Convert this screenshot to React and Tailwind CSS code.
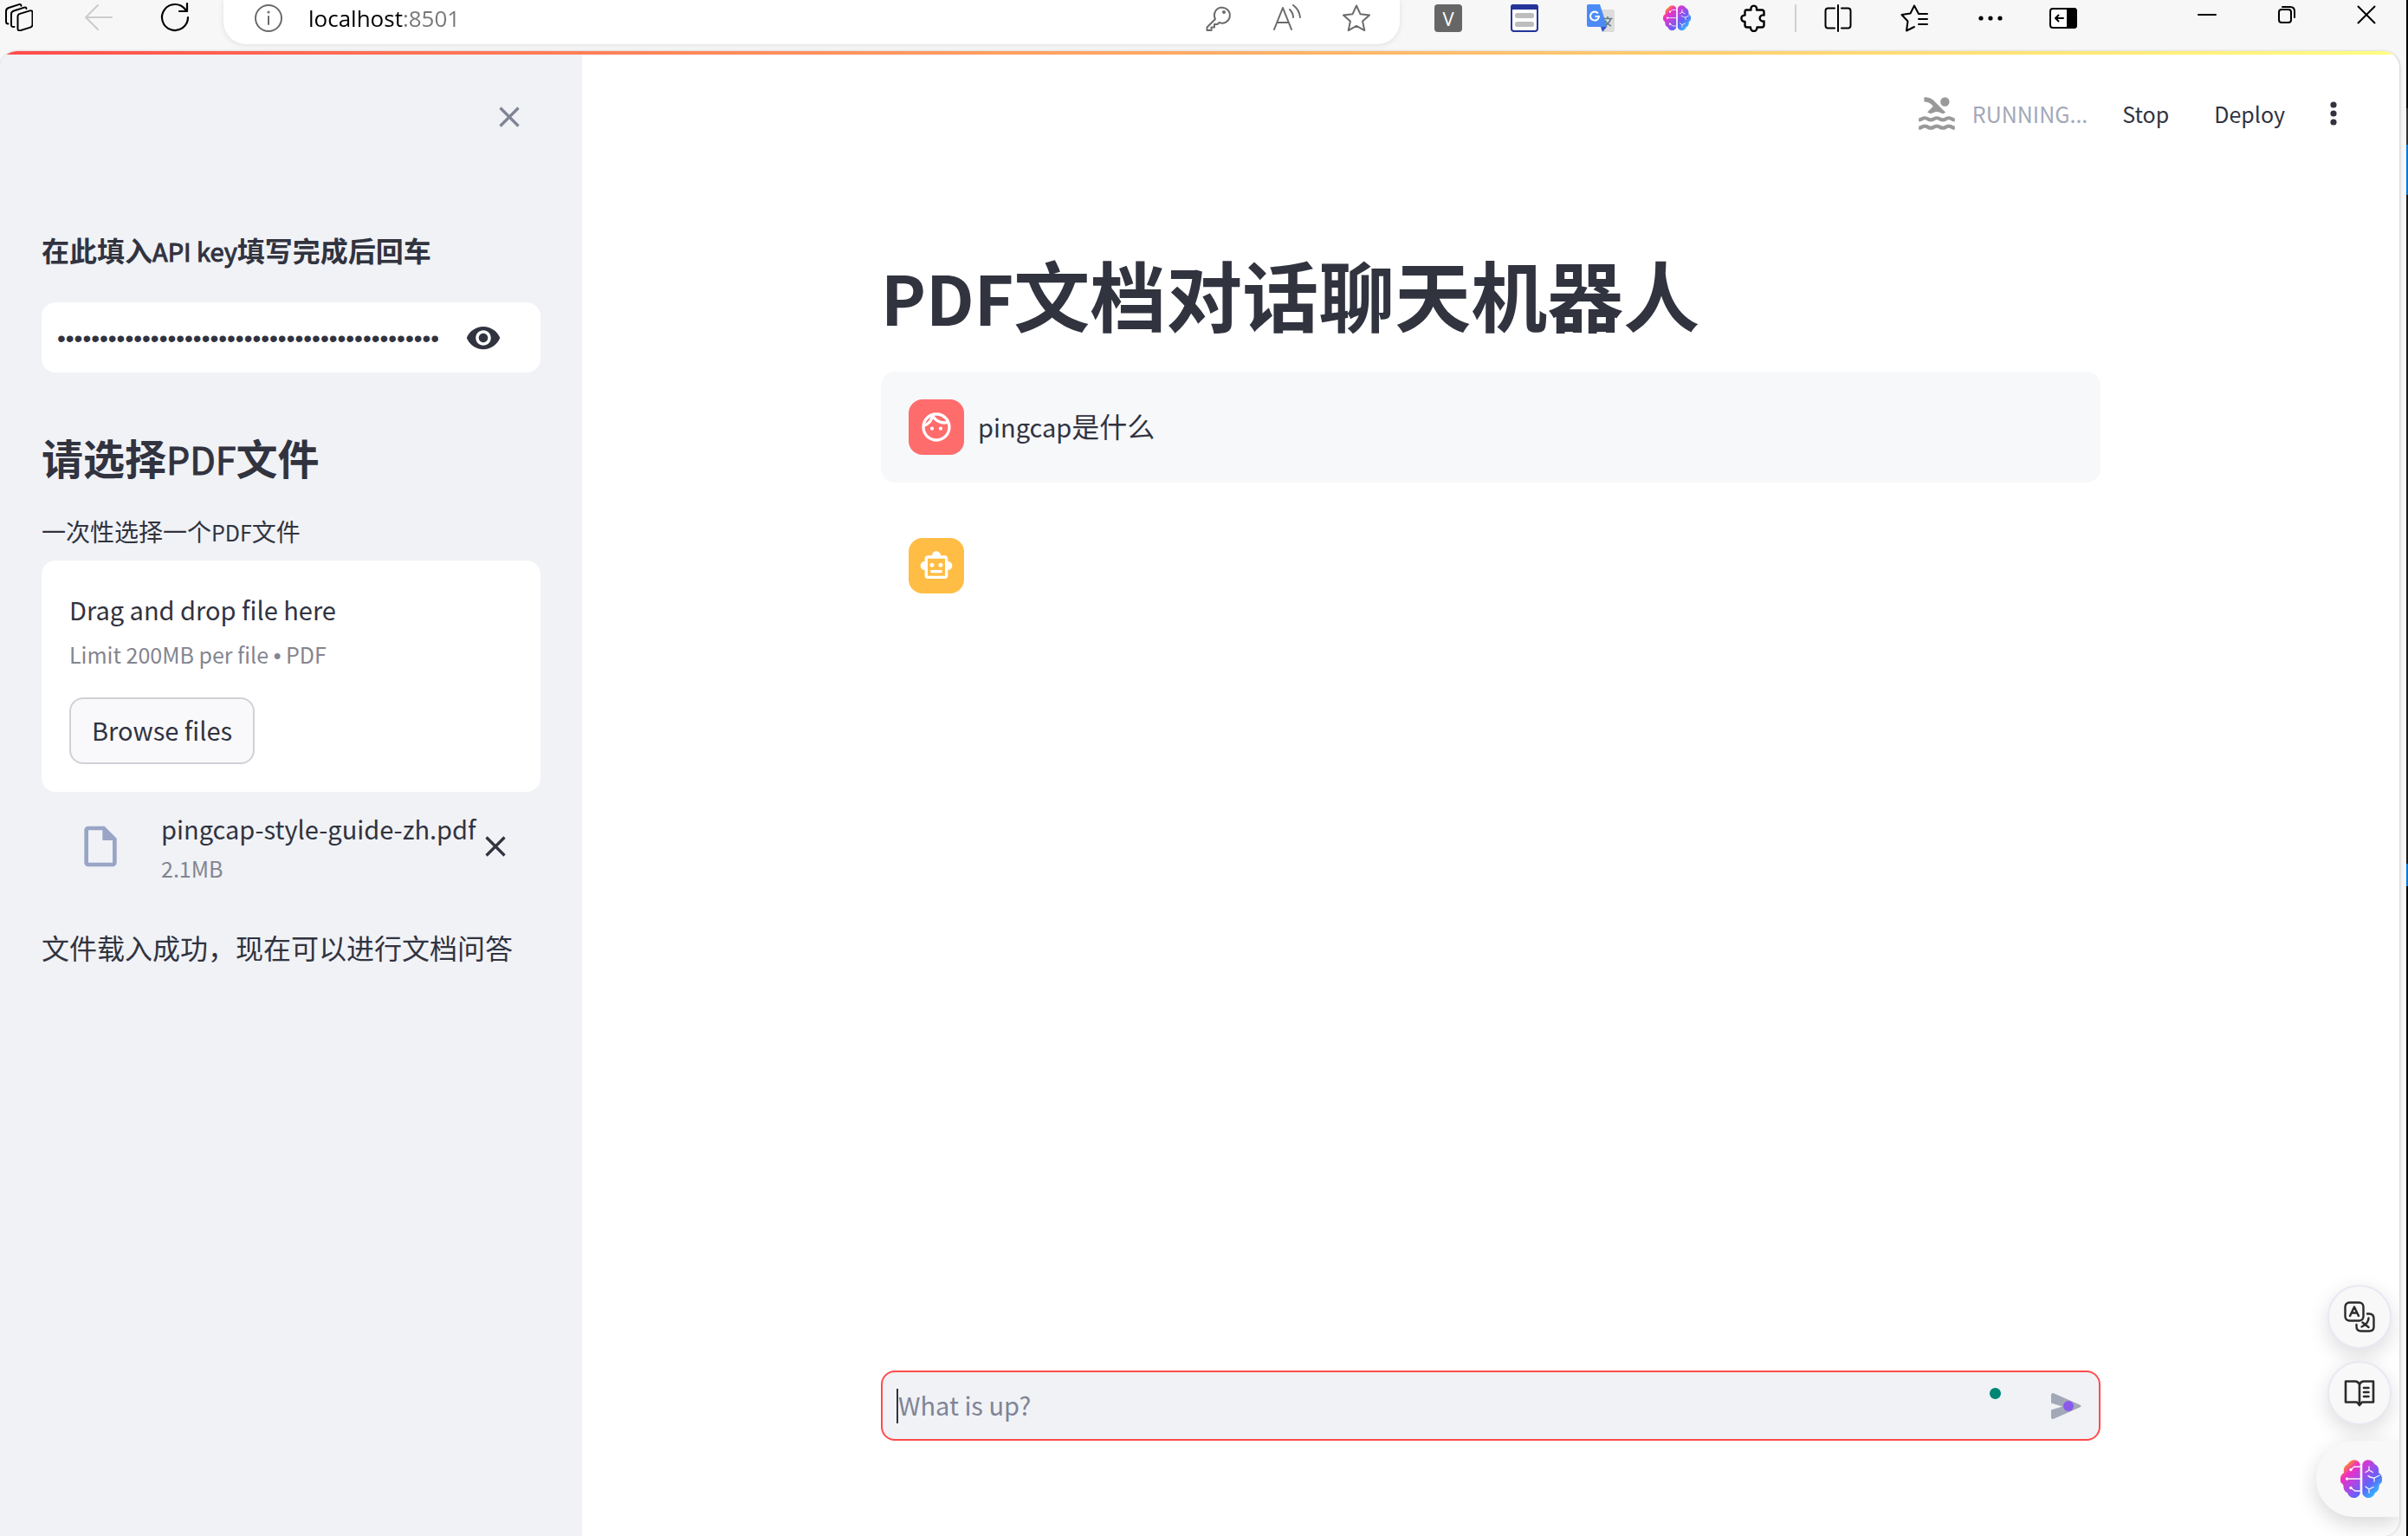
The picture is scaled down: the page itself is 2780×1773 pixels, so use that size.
import { MdOutlineFace, MdOutlineSmartToy, MdPool, MdVisibility, MdOutlineInsertDriveFile } from "react-icons/md";

function Icon({ size = "size-8", className = "", children, view = "0 0 32 32", sw = 2 }) {
  return (
    <svg viewBox={view} className={`${size} shrink-0 ${className}`} fill="none" stroke="currentColor" strokeWidth={sw} strokeLinecap="round" strokeLinejoin="round" aria-hidden="true">
      {children}
    </svg>
  );
}

function Brain({ className, id }) {
  return (
    <svg viewBox="0 0 48 44" className={`shrink-0 ${className}`} aria-hidden="true">
      <defs>
        <linearGradient id={id} x1="5" y1="3" x2="42" y2="40" gradientUnits="userSpaceOnUse">
          <stop offset="0" stopColor="#ffa800" />
          <stop offset="0.22" stopColor="#f02fc2" />
          <stop offset="0.5" stopColor="#a34be8" />
          <stop offset="0.72" stopColor="#5f63fa" />
          <stop offset="1" stopColor="#2fc0ff" />
        </linearGradient>
      </defs>
      <g fill={`url(#${id})`}>
        <path d="M22.700 6C22 -1 12 -2 8.500 5C5 6.500 3 10 4 15C0 17 -1.500 23 1 27C3 28 3.500 29 3.500 31C3.500 34 5 37 8 38C10 44 16 45.500 20 42.500C22 41 22.700 39.500 22.700 38Z" />
        <path d="M25.300 6C26 -1 36 -2 39.500 5C43 6.500 45 10 44 15C48 17 49.500 23 47 27C45 28 44.500 29 44.500 31C44.500 34 43 37 40 38C38 44 32 45.500 28 42.500C26 41 25.300 39.500 25.300 38Z" />
      </g>
      <g fill="none" stroke="#f7f7f7" strokeWidth="1.300" strokeLinecap="round">
        <path d="M23 8H16L12 11.500M23 22H8M23 36H17L12 32.500M33 8v4l-4 2.500M33 12l4.500 2.500M32 18.500c2 2.500 5 2 7 2.500l6-3M39 21v4M29 31l4 3l5-2.500M33 34v4" />
      </g>
      <g fill="#f7f7f7">
        <circle cx="12" cy="11.500" r="1.700" />
        <circle cx="7.500" cy="22" r="1.700" />
        <circle cx="12" cy="32.500" r="1.700" />
      </g>
    </svg>
  );
}

function BarButton({ label, children, className = "" }) {
  return (
    <button type="button" aria-label={label} className={`flex size-8 shrink-0 items-center justify-center ${className}`}>
      {children}
    </button>
  );
}

function TranslateLogo() {
  return (
    <svg viewBox="0 0 32 32" className="size-8" aria-hidden="true">
      <path d="M11 6h19q2 0 2 2v22q0 2-2 2H19z" fill="#dcdcdc" />
      <path d="M16 26h7l-5 6z" fill="#3a53c5" />
      <path d="M2 0h13l8.500 26H2q-2 0-2-2V2q0-2 2-2z" fill="#4c8bf5" />
      <path d="M13 10.500A5 5 0 1 0 14 14H9.500" fill="none" stroke="#fff" strokeWidth="2" />
      <path d="M19 16.500h10.500M24 14v2.500M27.500 16.500q-1 4.500-6 8M21 18.500q2 4 7 6.500" fill="none" stroke="#607d8b" strokeWidth="1.600" />
    </svg>
  );
}

function BrowserBar() {
  return (
    <header className="flex h-[59px] shrink-0 items-start justify-between pl-[6px] pr-[30px] text-black">
      <div className="flex items-start">
        <BarButton label="Workspaces" className="mt-1">
          <Icon>
            <path d="M14.500 15Q14.500 12.600 17 11.900L28.500 8.400Q31.500 7.600 31.500 10.500V24.500Q31.500 26.800 29 27.600L17.500 31.200Q14.500 32 14.500 29Z" />
            <path d="M24.500 6Q24.200 3.900 22 4.600L10 8.500Q7 9.500 7 12V25Q7 27.500 10.500 27M18.500 2.700Q18 0.500 16 1.100L4 5Q1 6 1 9V21Q1 23.500 3.500 23.500" />
          </Icon>
        </BarButton>
        <BarButton label="Back" className="ml-[60px] mt-1 text-[#cccccc]">
          <Icon><path d="M31 16H1M15 2L1 16l14 14" /></Icon>
        </BarButton>
        <BarButton label="Refresh" className="ml-14 mt-1">
          <Icon size="size-9" view="0 0 36 36" sw="2.200"><path d="M33 18A15 15 0 1 1 30 9M32 2v9h-9" /></Icon>
        </BarButton>
        <div className="ml-10 flex h-[51px] w-[1358px] items-start rounded-b-[26px] bg-white pl-9 pr-[34px] pt-[5px] text-[#6b6b6b] shadow-[0_1px_6px_rgba(0,0,0,0.1)]">
          <Icon>
            <circle cx="16" cy="16" r="15" />
            <path d="M16 14v9" /><circle cx="16" cy="9" r="0.600" />
          </Icon>
          <input
            aria-label="Address"
            defaultValue="localhost:8501"
            className="ml-[30px] h-8 min-w-0 flex-1 bg-linear-to-r from-black from-[111px] to-[#777777] to-[111px] bg-clip-text font-['Open_Sans','Noto_Sans',sans-serif] text-[26px] leading-8 text-transparent outline-none"
          />
          <div className="flex gap-12">
            <Icon>
              <path d="M13 17L3.500 26.500V30h5v-3.500h3.500V23h3.500l2-2A9 9 0 1 0 13 17z" /><circle cx="23" cy="9" r="1" />
            </Icon>
            <Icon><path d="M1 29L11 4l10 25M4.500 21h13M19 6q4 4 4 9M23 1q7 5 8 14" /></Icon>
            <Icon><path d="M16 1.500l4.400 9.700 10.600 1.200-7.900 7.200 2.200 10.500L16 24.900 6.700 30.100l2.200-10.500L1 12.400l10.600-1.200z" /></Icon>
          </div>
        </div>
        <div className="ml-10 mt-[5px] flex items-start gap-14">
          <BarButton label="V extension" className="rounded bg-[#666666] font-['Open_Sans',sans-serif] text-[22px] leading-8 text-white">V</BarButton>
          <BarButton label="Window extension">
            <svg viewBox="0 0 32 32" className="size-8" aria-hidden="true">
              <rect x="1" y="1" width="30" height="30" rx="3" fill="#fff" stroke="#24349a" strokeWidth="2" />
              <path d="M0 6V3q0-3 3-3h26q3 0 3 3v3z" fill="#24349a" />
              <rect x="5" y="10" width="22" height="6" rx="2.500" fill="#bdbdbd" />
              <rect x="5" y="20" width="22" height="6" rx="2.500" fill="#bdbdbd" />
            </svg>
          </BarButton>
          <BarButton label="Translate extension"><TranslateLogo /></BarButton>
          <BarButton label="Assistant extension"><Brain id="brain-small" className="w-8" /></BarButton>
          <BarButton label="Extensions">
            <Icon sw="2.400">
              <path d="M8 6.500H13.500C12.500 0 21 0 20 6.500H26Q28.500 6.500 28.500 9V12.500C22 11.500 22 20.500 28.500 19.500V24Q28.500 26.500 26 26.500H20.500C20.500 32.500 13 32.500 13 26.500H9Q6.500 26.500 6.500 24V20C1 20 1 12.500 6.500 12.500V9Q6.500 6.500 8 6.500" />
            </Icon>
          </BarButton>
        </div>
        <div className="ml-8 mt-[5px] h-8 w-0.5 bg-[#d0d0d0]" />
        <div className="ml-8 mt-[5px] flex items-start gap-14">
          <BarButton label="Split screen"><Icon><path d="M12 4.500H4.500Q1.500 4.500 1.500 7.500V24.500Q1.500 27.500 4.500 27.500H12M20 4.500H27.500Q30.500 4.500 30.500 7.500V24.500Q30.500 27.500 27.500 27.500H20M16 1V31" /></Icon></BarButton>
          <BarButton label="Favorites"><Icon><path d="M21 11L16 1.500L11.500 10.500L1.500 12L8.500 19.500L7 30.500L16 26M21 11H31M21 17H31M21 23H31" /></Icon></BarButton>
          <BarButton label="More">
            <svg viewBox="0 0 32 32" className="size-8" fill="currentColor" aria-hidden="true"><circle cx="5" cy="16" r="2.600" /><circle cx="16" cy="16" r="2.600" /><circle cx="27" cy="16" r="2.600" /></svg>
          </BarButton>
          <BarButton label="Side panel" className="-ml-1">
            <Icon><rect x="1" y="5" width="30" height="22" rx="3" fill="#fff" /><path d="M21 5h7q3 0 3 3v16q0 3-3 3h-7z" fill="currentColor" /><path d="M16 16H7M10.500 12.500L7 16l3.500 3.500" /></Icon>
          </BarButton>
        </div>
      </div>
      <div className="mt-px flex items-start gap-[60px]">
        <BarButton label="Minimize"><Icon><path d="M6 16H26" /></Icon></BarButton>
        <BarButton label="Restore"><Icon><rect x="7" y="10" width="14" height="15" rx="3" /><path d="M11 7h9q5 0 5 5v7" /></Icon></BarButton>
        <BarButton label="Close window"><Icon><path d="M6.500 6.500L25.500 25.500M25.500 6.500L6.500 25.500" /></Icon></BarButton>
      </div>
    </header>
  );
}

function Cross({ size = "size-6" }) {
  return (
    <svg viewBox="0 0 24 24" className={size} fill="none" stroke="currentColor" strokeWidth="3.200" aria-hidden="true">
      <path d="M1.500 1.500L22.500 22.500M22.500 1.500L1.500 22.500" />
    </svg>
  );
}

function Sidebar() {
  return (
    <aside className="w-[672px] shrink-0 bg-[#f0f2f6] px-12 pt-[52px]">
      <div className="flex justify-end pr-3">
        <button type="button" aria-label="Close sidebar" className="flex size-12 items-center justify-center text-[#808495]"><Cross /></button>
      </div>
      <label htmlFor="api-key" className="mt-[105px] block text-[32px] leading-[48px] font-bold">
        在此填入<span className="text-[29px] leading-none font-normal [-webkit-text-stroke:1px]">API key</span>填写完成后回车
      </label>
      <div className="mt-[37px] flex h-[81px] items-center rounded-2xl bg-white pl-[18px] pr-[45px]">
        <input id="api-key" type="password" defaultValue="sk-0123456789abcdefghijklmnopqrstuvwxyz0123456789ab" className="h-12 min-w-0 flex-1 bg-transparent pt-0.5 font-['Liberation_Sans',sans-serif] text-[28px] outline-none" />
        <button type="button" aria-label="Show password" className="ml-[31px]"><MdVisibility className="size-[42px]" /></button>
      </div>
      <h2 className="mt-[68px] text-[48px] leading-[58px] font-bold">
        请选择<span className="text-[43px] leading-none font-normal [-webkit-text-stroke:1px]">PDF</span>文件
      </h2>
      <label htmlFor="browse" className="mt-[37px] block text-[28px] leading-10">
        一次性选择一个<span className="text-[25px] leading-none">PDF</span>文件
      </label>
      <section className="mt-[14px] rounded-2xl bg-white p-8">
        <p className="text-[29px] leading-[48px]">Drag and drop file here</p>
        <p className="mt-2 text-[25px] leading-10 text-[#84858f]">Limit 200MB per file <span className="font-['Liberation_Sans',sans-serif] leading-none">•</span> PDF</p>
        <button id="browse" type="button" className="mt-[30px] flex h-[77px] items-center rounded-2xl border-2 border-[#d0d1d7] bg-[#f9f9fb] px-6 pb-1 text-[29px] leading-[48px]">Browse files</button>
      </section>
      <div className="mt-[18px] flex items-center pl-10 pr-9">
        <MdOutlineInsertDriveFile className="size-14 shrink-0 text-[#98a5c6]" />
        <div className="ml-[42px] min-w-0 flex-1">
          <p className="whitespace-nowrap text-[29px] leading-[48px]">pingcap-style-guide-zh.pdf</p>
          <p className="mt-0.5 text-[25px] leading-10 text-[#84858f]">2.1MB</p>
        </div>
        <button type="button" aria-label="Remove file" className="flex w-8 shrink-0 justify-center"><Cross /></button>
      </div>
      <p className="mt-[47px] text-[32px] leading-[48px]">文件载入成功，现在可以进行文档问答</p>
    </aside>
  );
}

function Main() {
  return (
    <main className="flex min-w-0 flex-1 flex-col bg-white">
      <div className="flex h-36 items-center justify-end pr-14 text-[25px] leading-10">
        <MdPool className="size-[50px] text-[#999999]" />
        <span className="ml-4 text-[#a3a8b8]">RUNNING...</span>
        <button type="button" className="ml-10">Stop</button>
        <button type="button" className="ml-[52px]">Deploy</button>
        <button type="button" aria-label="Main menu" className="ml-9">
          <svg viewBox="0 0 40 40" className="size-10" fill="currentColor" aria-hidden="true"><circle cx="20" cy="10" r="3.600" /><circle cx="20" cy="20" r="3.600" /><circle cx="20" cy="30" r="3.600" /></svg>
        </button>
      </div>
      <div className="mx-auto flex w-full max-w-[1408px] flex-1 flex-col pb-[110px]">
        <h1 className="mt-[82px] text-[88px] leading-[106px] font-bold"><span className="text-[78px] leading-none">PDF</span>文档对话聊天机器人</h1>
        <div className="mt-[38px] flex items-center gap-4 rounded-2xl bg-[#f7f8fa] p-8">
          <div className="flex size-16 items-center justify-center rounded-2xl bg-[#ff6c6c] text-white"><MdOutlineFace className="size-10" /></div>
          <p className="pb-1 text-[32px] leading-[48px]"><span className="text-[29px] leading-none">pingcap</span>是什么</p>
        </div>
        <div className="mt-8 flex items-center rounded-2xl p-8">
          <div className="flex size-16 items-center justify-center rounded-2xl bg-[#ffbd45] text-white"><MdOutlineSmartToy className="size-10" /></div>
        </div>
        <form className="relative mt-auto flex h-[81px] items-center rounded-2xl border-2 border-[#ff4b4b] bg-[#f0f2f6] pl-4 pr-5">
          <span className="h-10 w-0.5 bg-[#31333f]" />
          <input aria-label="Message" placeholder="What is up?" className="h-12 min-w-0 flex-1 bg-transparent pb-1 text-[29px] outline-none placeholder:text-[#808495] placeholder:opacity-100" />
          <span className="mb-7 mr-14 size-[15px] rounded-full border border-white bg-[#008575]" />
          <button type="button" aria-label="Send">
            <svg viewBox="0 0 36 32" className="h-8 w-9" aria-hidden="true">
              <path d="M1 3.500Q1 0 4 1.300L34 14.500Q37 16 34 17.500L4 30.700Q1 32 1 28.500V20.500L14 16.500L1 12.500Z" fill="#a3a8b8" />
              <circle cx="21" cy="16" r="6" fill="#8a5aec" />
            </svg>
          </button>
        </form>
      </div>
    </main>
  );
}

function FloatingTools() {
  return (
    <div className="absolute bottom-[22px] right-0 flex w-24 flex-col items-end">
      <button type="button" aria-label="Translate page" className="mr-[9px] flex size-[74px] items-center justify-center rounded-full border-2 border-[#e8e8f2] bg-[#f8f8f8] text-[#2b2b2b] shadow-[0_8px_24px_rgba(0,0,0,0.14)]">
        <Icon size="size-9" view="0 0 36 36" sw="2.400">
          <rect x="1.500" y="1.500" width="21" height="21" rx="5" />
          <path d="M7 17L12 6.500L17 17M9 13.500H15M27 14.500H29Q34.500 14.500 34.500 20V29.500Q34.500 34.500 29 34.500H20Q14.500 34.500 14.500 29V27" />
          <path d="M28.500 19.500Q28 26 20.500 29.500M21.500 24.500L28.500 30" />
        </Icon>
      </button>
      <button type="button" aria-label="Reader" className="mr-[9px] mt-3.5 flex size-[74px] items-center justify-center rounded-full border-2 border-[#e8e8f2] bg-[#f8f8f8] text-[#2b2b2b] shadow-[0_8px_24px_rgba(0,0,0,0.14)]">
        <Icon size="size-9" view="0 0 36 36" sw="2.600">
          <path d="M18 8Q16.500 4.500 13 4.500H2V28.500H15L18 32L21 28.500H34V4.500H23Q19.500 4.500 18 8V31M23 12H28.500M23 17H28.500M23 22H28.500" />
        </Icon>
      </button>
      <button type="button" aria-label="Open assistant" className="mt-[18px] flex h-[88px] w-24 items-center rounded-l-full bg-[#f8f8f8] pl-7 shadow-[0_8px_24px_rgba(0,0,0,0.16)]">
        <Brain id="brain-large" className="w-12" />
      </button>
    </div>
  );
}

function DesktopEdge() {
  return (
    <div className="flex w-0.5 shrink-0 flex-col bg-black">
      <div className="h-[125px]" />
      <div className="h-[42px] bg-[#333333]" />
      <div className="h-[58px] bg-[#0078d7]" />
      <div className="h-[772px] bg-[#1a1a1a]" />
      <div className="h-[26px] bg-[#0078d7]" />
    </div>
  );
}

export default function App() {
  return (
    <div className="flex min-h-screen font-['Noto_Sans_CJK_SC',sans-serif] text-[#31333f]">
      <div className="flex min-w-0 flex-1 flex-col bg-[#f7f7f7]">
        <BrowserBar />
        <div className="relative mr-[7px] flex flex-1 overflow-hidden rounded-t-[20px] rounded-br-[20px] border-r border-[#dddddd] bg-white shadow-[0_0_3px_rgba(0,0,0,0.2)]">
          <div className="absolute inset-x-0 top-0 h-1 bg-linear-to-r from-[#ff4b4b] to-[#fffd80]" />
          <Sidebar />
          <Main />
          <FloatingTools />
        </div>
      </div>
      <DesktopEdge />
    </div>
  );
}
